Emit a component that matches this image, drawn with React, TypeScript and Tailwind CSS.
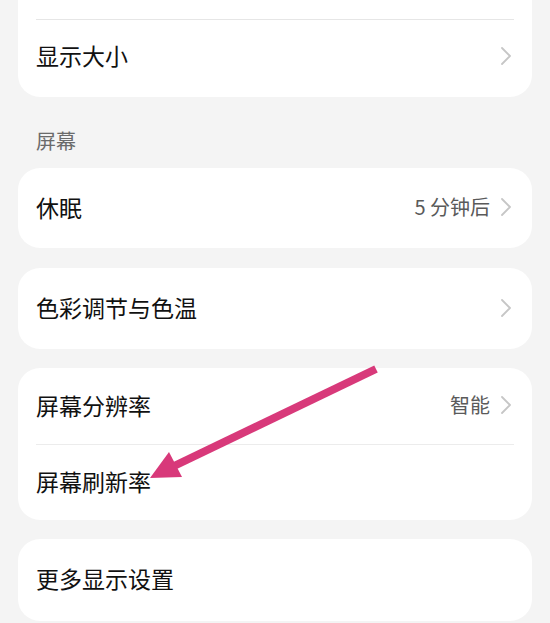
import React from "react";

const font = { fontFamily: '"Noto Sans CJK SC", "Noto Sans", sans-serif' };

function Chevron() {
  return (
    <svg width="12" height="20" viewBox="0 0 12 20" className="ml-[10px] shrink-0">
      <path d="M2 2 L10 10 L2 18" fill="none" stroke="#c6c6c6" strokeWidth="1.8" strokeLinecap="round" strokeLinejoin="round" />
    </svg>
  );
}

function Row({ label, value, chevron = true, h = "h-[80px]", extra = "" }: { label: string; value?: string; chevron?: boolean; h?: string; extra?: string }) {
  return (
    <div className={`flex items-center ${h} pl-[18px] pr-[20px] ${extra}`}>
      <span className="text-[23px] font-normal text-[#111111] leading-none">{label}</span>
      <div className="flex-1" />
      {value && <span className="text-[20px] text-[#5a5a5a] leading-none">{value}</span>}
      {chevron && <Chevron />}
    </div>
  );
}

export default function App() {
  return (
    <div className="relative w-[550px] h-[623px] overflow-hidden bg-[#f4f4f4]" style={font}>
      <div className="px-[18px] flex flex-col">
        <div className="bg-white rounded-b-[22px]">
          <div className="h-[19px]" />
          <div className="mx-[18px] border-t border-[#e6e6e6]" />
          <Row label="显示大小" h="h-[77px]" extra="pb-[6px]" />
        </div>
        <div className="h-[71px] pl-[18px] pt-[33px]">
          <span className="text-[20px] text-[#6b6b6b] leading-none">屏幕</span>
        </div>
        <div className="bg-white rounded-[22px]">
          <Row label="休眠" value="5 分钟后" extra="pb-[2px]" />
        </div>
        <div className="h-[20px]" />
        <div className="bg-white rounded-[22px]">
          <Row label="色彩调节与色温" h="h-[81px]" extra="pb-[2px]" />
        </div>
        <div className="h-[19px]" />
        <div className="bg-white rounded-[22px]">
          <Row label="屏幕分辨率" value="智能" h="h-[76px]" extra="pb-[2px]" />
          <div className="mx-[18px] border-t border-[#ececec]" />
          <Row label="屏幕刷新率" chevron={false} h="h-[75px]" extra="pb-[2px]" />
        </div>
        <div className="h-[19px]" />
        <div className="bg-white rounded-[22px]">
          <Row label="更多显示设置" chevron={false} h="h-[82px]" extra="pb-[4px]" />
        </div>
      </div>
      <svg className="absolute left-0 top-0 pointer-events-none" width="550" height="623" viewBox="0 0 550 623">
        <line x1="376" y1="369" x2="172" y2="467" stroke="#d8397a" strokeWidth="8" strokeLinecap="butt" />
        <polygon points="150,478 169,452 182,477" fill="#d8397a" />
      </svg>
    </div>
  );
}
